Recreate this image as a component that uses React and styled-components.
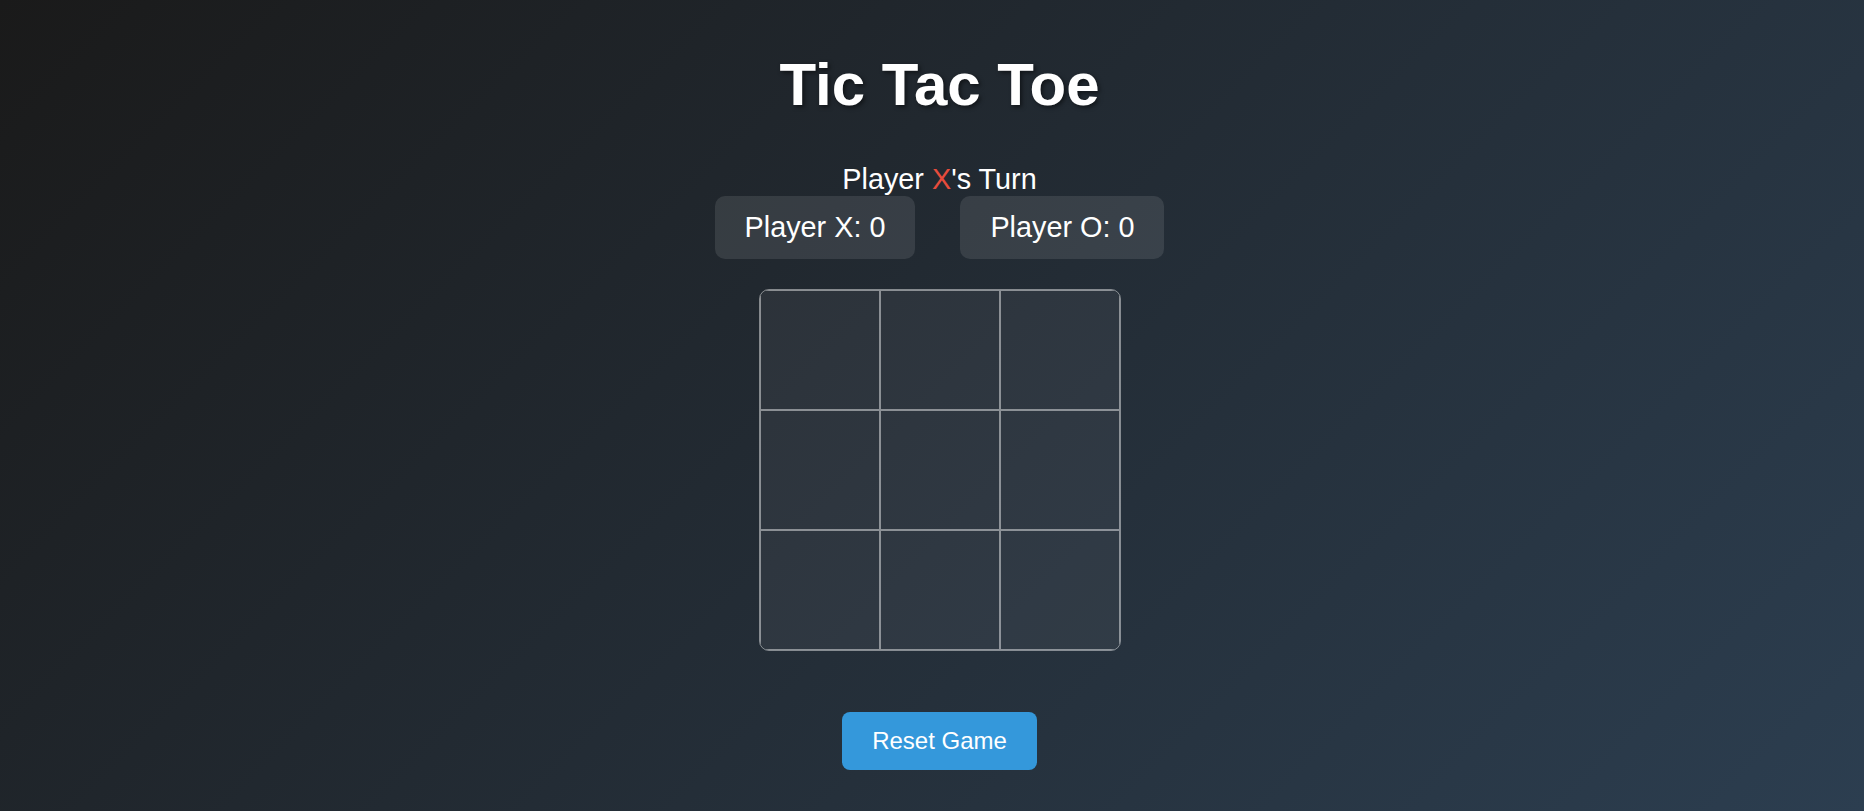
import React, { useState } from 'react';
import styled, { createGlobalStyle } from 'styled-components';

const GlobalStyle = createGlobalStyle`
  html, body {
    margin: 0;
    padding: 0;
    height: 100%;
  }
  body {
    font-family: "Liberation Sans", Arial, sans-serif;
    background: linear-gradient(135deg, #1a1a1a, #2c3e50);
    background-attachment: fixed;
    color: #fff;
    overflow: hidden;
  }
  #root {
    min-height: 100%;
  }
`;

const Page = styled.div`
  box-sizing: border-box;
  min-height: 100vh;
  padding: 50px 0 0 15px;
  display: flex;
  flex-direction: column;
  align-items: center;
`;

const Title = styled.h1`
  margin: 0 0 44px;
  font-size: 60px;
  font-weight: bold;
  text-shadow: 2px 2px 4px rgba(0, 0, 0, 0.5);
`;

const Status = styled.div`
  font-size: 28.8px;
`;

const Mark = styled.span`
  color: ${(p) => (p.player === 'X' ? '#e74c3c' : '#3498db')};
`;

const ScoreRow = styled.div`
  display: flex;
  gap: 45px;
  margin-bottom: 30px;
`;

const ScoreBox = styled.div`
  padding: 15px 30px;
  font-size: 28.8px;
  background: rgba(255, 255, 255, 0.1);
  border-radius: 10px;
`;

const Board = styled.div`
  display: grid;
  grid-template-columns: repeat(3, 120px);
  grid-template-rows: repeat(3, 120px);
  border: 1px solid rgba(255, 255, 255, 0.45);
  border-radius: 10px;
  overflow: hidden;
  margin-bottom: 61px;
`;

const Cell = styled.button`
  box-sizing: border-box;
  width: 120px;
  height: 120px;
  margin: 0;
  padding: 0;
  border: 1px solid rgba(255, 255, 255, 0.45);
  background: rgba(255, 255, 255, 0.05);
  font-family: inherit;
  font-size: 64px;
  font-weight: bold;
  color: ${(p) => (p.value === 'X' ? '#e74c3c' : '#3498db')};
  cursor: pointer;
`;

const ResetButton = styled.button`
  padding: 15px 30px;
  font-family: inherit;
  font-size: 24px;
  color: #fff;
  background: #3498db;
  border: none;
  border-radius: 8px;
  cursor: pointer;
`;

const lines = [
  [0, 1, 2], [3, 4, 5], [6, 7, 8],
  [0, 3, 6], [1, 4, 7], [2, 5, 8],
  [0, 4, 8], [2, 4, 6],
];

function winnerOf(cells) {
  for (const [a, b, c] of lines) {
    if (cells[a] && cells[a] === cells[b] && cells[a] === cells[c]) return cells[a];
  }
  return null;
}

export default function App() {
  const [cells, setCells] = useState(Array(9).fill(null));
  const [turn, setTurn] = useState('X');
  const [scores, setScores] = useState({ X: 0, O: 0 });

  const play = (i) => {
    if (cells[i] || winnerOf(cells)) return;
    const next = cells.slice();
    next[i] = turn;
    setCells(next);
    const w = winnerOf(next);
    if (w) setScores({ ...scores, [w]: scores[w] + 1 });
    else setTurn(turn === 'X' ? 'O' : 'X');
  };

  const reset = () => {
    setCells(Array(9).fill(null));
    setTurn('X');
  };

  const winner = winnerOf(cells);

  return (
    <>
      <GlobalStyle />
      <Page>
        <Title>Tic Tac Toe</Title>
        <Status>
          Player <Mark player={winner || turn}>{winner || turn}</Mark>
          {winner ? ' Wins!' : "'s Turn"}
        </Status>
        <ScoreRow>
          <ScoreBox>Player X: {scores.X}</ScoreBox>
          <ScoreBox>Player O: {scores.O}</ScoreBox>
        </ScoreRow>
        <Board>
          {cells.map((v, i) => (
            <Cell key={i} value={v} onClick={() => play(i)}>
              {v}
            </Cell>
          ))}
        </Board>
        <ResetButton onClick={reset}>Reset Game</ResetButton>
      </Page>
    </>
  );
}
